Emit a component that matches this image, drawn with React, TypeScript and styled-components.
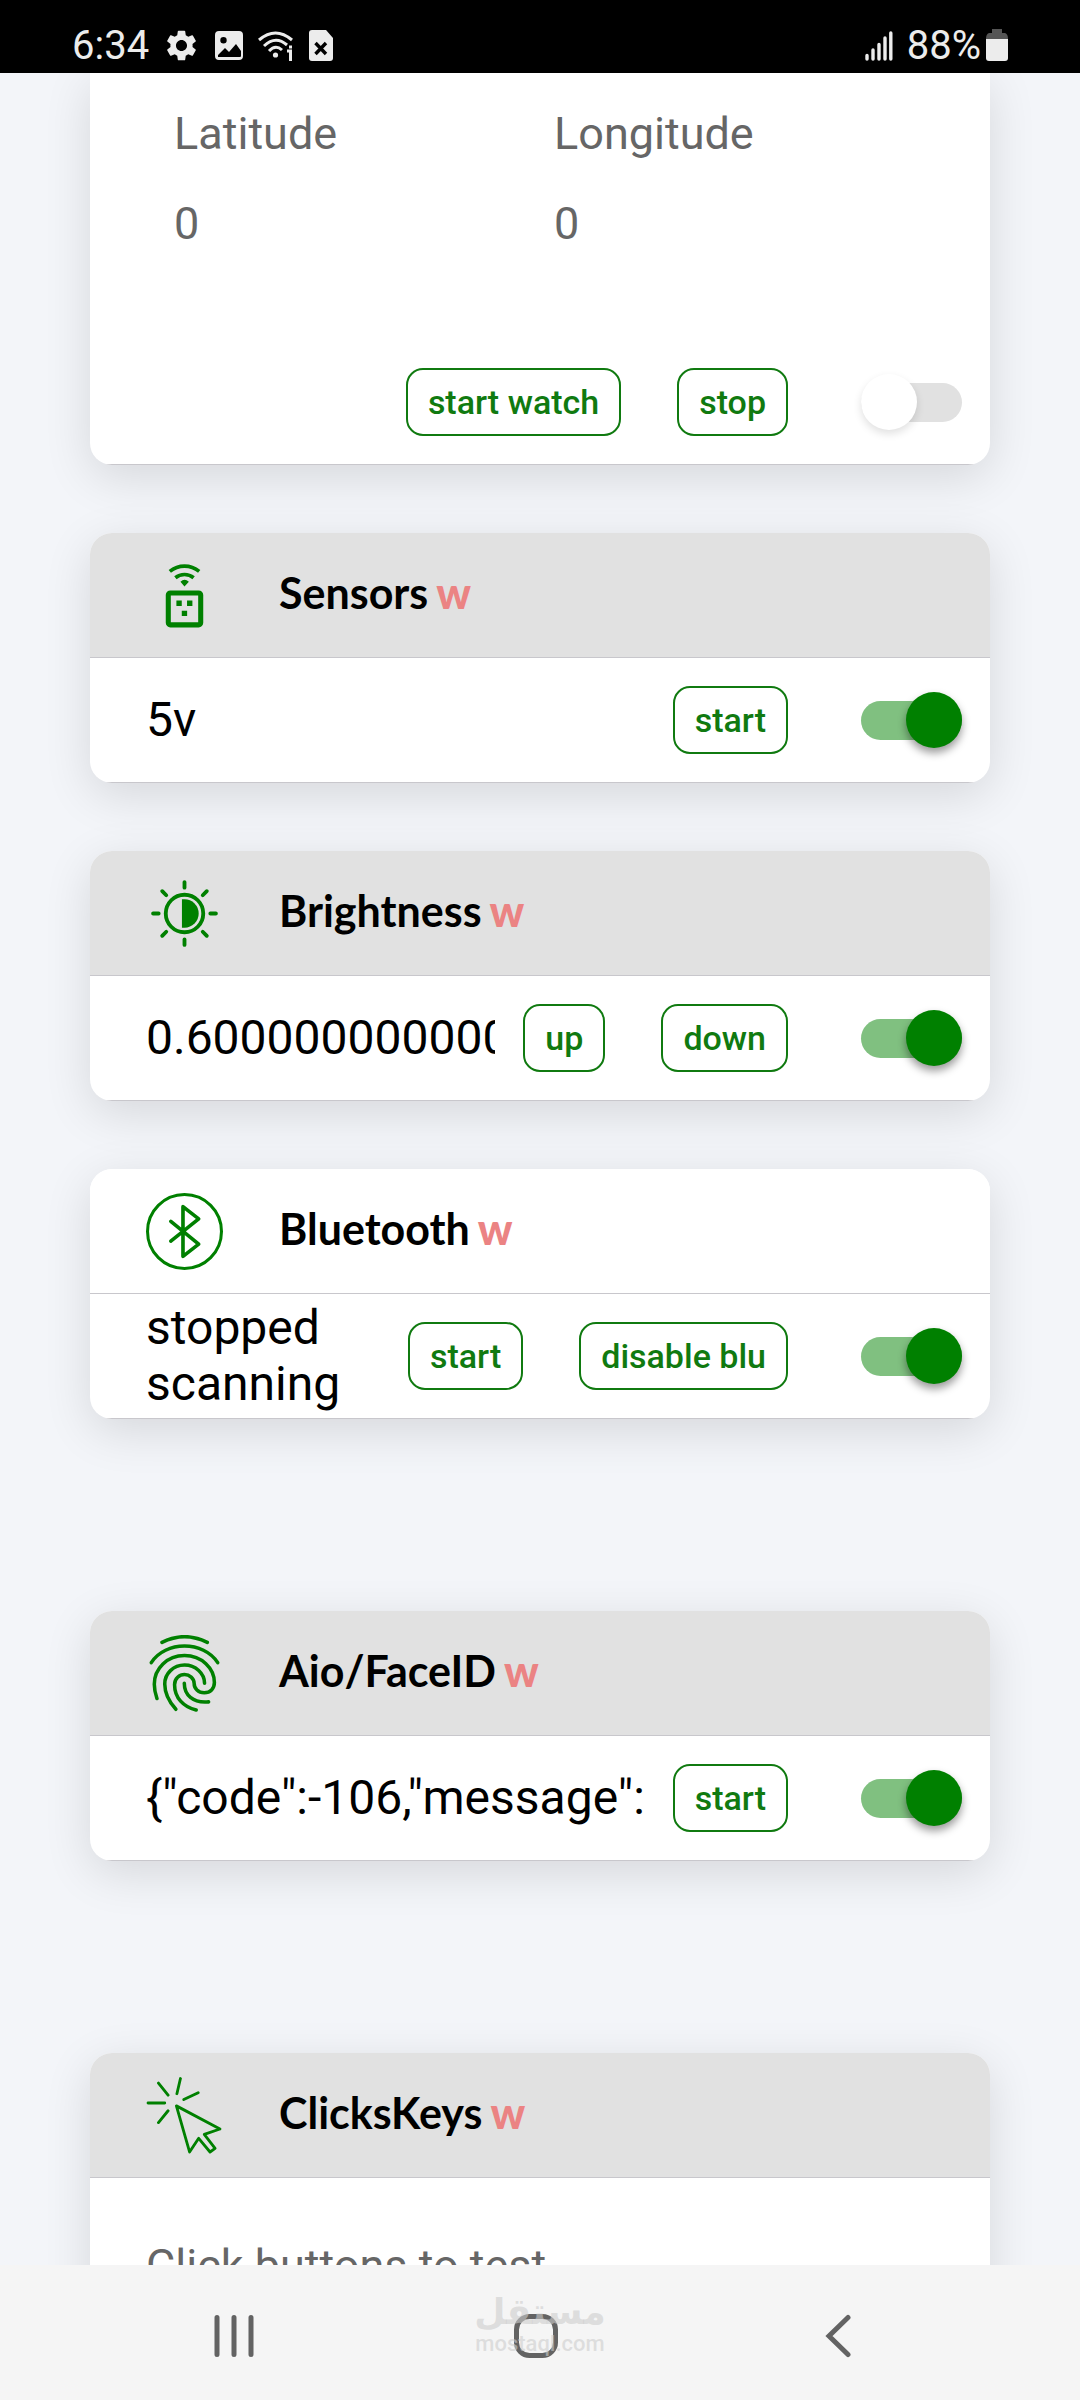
import React from "react";
import styled, { createGlobalStyle } from "styled-components";
import { MdSettings } from "react-icons/md";

const GlobalStyle = createGlobalStyle`
  * { box-sizing: border-box; }
  body {
    margin: 0;
    background: #f3f5f9;
    font-family: Roboto, "Liberation Sans", sans-serif;
    color: #000;
  }
`;

const Screen = styled.div`
  display: flex;
  flex-direction: column;
  height: 100vh;
  overflow: hidden;
`;

const StatusBar = styled.header`
  display: flex;
  flex: none;
  align-items: center;
  justify-content: space-between;
  height: 73px;
  padding: 18px 72px 0;
  background: #000;
  color: #ececec;
  font-size: 40px;
  line-height: 54px;
  position: relative;
  z-index: 1;
`;

const StatusGroup = styled.div<{ $gap: number }>`
  display: flex;
  align-items: center;
  gap: ${(p) => p.$gap}px;

  svg {
    display: block;
  }
`;

const Content = styled.main`
  flex: 1;
  min-height: 0;
  overflow: hidden;
  padding: 0 90px;
`;

const Card = styled.section<{ $gap?: number; $continued?: boolean }>`
  margin-top: ${(p) => p.$gap ?? 0}px;
  overflow: hidden;
  border-radius: ${(p) => (p.$continued ? "0 0 22px 22px" : "22px")};
  background: #fff;
  box-shadow: 0 12px 48px rgba(0, 0, 0, 0.12);
`;

const CardHeader = styled.header<{ $plain?: boolean }>`
  display: flex;
  align-items: center;
  gap: 56px;
  height: 125px;
  padding: 0 56px;
  border-bottom: 1px solid #c8c7cc;
  background: ${(p) => (p.$plain ? "#fff" : "#e1e1e1")};
  color: #008000;

  svg {
    flex: none;
    display: block;
  }
`;

const Title = styled.h2`
  display: flex;
  gap: 8px;
  margin: 0;
  padding-bottom: 4px;
  color: #000;
  font-family: Lato, "Open Sans", sans-serif;
  font-size: 43px;
  font-weight: 700;
  line-height: 56px;
`;

const Flag = styled.span`
  color: #eb8383;
  font-weight: 900;
`;

const Row = styled.div`
  display: flex;
  align-items: center;
  height: 125px;
  padding: 0 28px 0 56px;
  border-bottom: 1px solid #c8c7cc;
`;

const Value = styled.output<{ $wrap?: boolean }>`
  flex: 1;
  min-width: 0;
  margin-right: 28px;
  overflow: hidden;
  font-size: 48px;
  line-height: 56px;
  white-space: ${(p) => (p.$wrap ? "normal" : "nowrap")};
`;

const Actions = styled.div`
  display: flex;
  flex: none;
  gap: 56px;
  margin-right: 73px;
`;

const Button = styled.button`
  height: 68px;
  padding: 0 20px;
  border: 2px solid #107a10;
  border-radius: 17px;
  background: #fff;
  color: #107a10;
  font-family: inherit;
  font-size: 34px;
  font-weight: 500;
  line-height: 40px;
  white-space: nowrap;
`;

const Switch = styled.input`
  appearance: none;
  display: flex;
  flex: none;
  align-items: center;
  width: 101px;
  height: 39px;
  margin: 0;
  border-radius: 20px;
  background: #e1e1e1;

  &::before {
    content: "";
    flex: none;
    width: 56px;
    height: 56px;
    border-radius: 50%;
    background: #fff;
    box-shadow: 0 4px 8px rgba(0, 0, 0, 0.12);
  }

  &:checked {
    justify-content: flex-end;
    background: #80c080;
  }

  &:checked::before {
    background: #008000;
    box-shadow: 0 5px 9px rgba(0, 0, 0, 0.4);
  }
`;

const Coordinates = styled.dl`
  display: grid;
  grid-template-columns: 1fr 1fr;
  margin: 0;
  padding: 16px 56px 71px 84px;
  color: #666;
  font-size: 45px;
  line-height: 90px;

  dt,
  dd {
    margin: 0;
  }
`;

const Hint = styled.p`
  margin: 0;
  padding: 60px 56px;
  color: #666;
  font-size: 45px;
  line-height: 56px;
`;

const NavBar = styled.nav`
  display: flex;
  flex: none;
  height: 135px;
  padding: 0 91px 0 83px;
  background: #f5f5f5;
  position: relative;
  z-index: 1;
`;

const NavButton = styled.button`
  display: flex;
  flex: 1;
  align-items: center;
  justify-content: center;
  padding: 6px 0 0;
  border: 0;
  background: none;
  color: #636363;
`;

const Watermark = styled.div`
  position: absolute;
  top: 24px;
  left: 50%;
  display: flex;
  flex-direction: column;
  align-items: center;
  transform: translateX(-50%);
  color: rgba(205, 205, 205, 0.6);
  font-weight: 700;
  pointer-events: none;
`;

const WatermarkName = styled.span`
  font-family: "DejaVu Sans", sans-serif;
  font-size: 36px;
  line-height: 46px;
`;

const WatermarkSite = styled.span`
  font-size: 22px;
  font-weight: 500;
  line-height: 18px;
`;

const PictureIcon = () => (
  <svg width="30" height="32" viewBox="0 0 30 32" fill="#ececec" aria-hidden="true">
    <path
      fillRule="evenodd"
      d="M5 1h20a4 4 0 0 1 4 4v21a4 4 0 0 1-4 4H5a4 4 0 0 1-4-4V5a4 4 0 0 1 4-4zM4 25v2h22a1 1 0 0 0 1-1v-5l-5-7-7 8-4-4zM9.500 7a3.200 3.200 0 1 0 0 6.400a3.200 3.200 0 1 0 0-6.400z"
    />
  </svg>
);

const WifiInfoIcon = () => (
  <svg width="36" height="32" viewBox="0 0 36 32" fill="none" stroke="#ececec" strokeWidth="3" aria-hidden="true">
    <path d="M1 10Q17.500-4 34 10M6 16Q17.500 5 29 15M11 21Q17.500 14 24 20" />
    <circle cx="17.500" cy="25" r="2.600" fill="#ececec" stroke="none" />
    <path d="M29 21H32.500V31M32.500 15.500V18.500" />
  </svg>
);

const SimIcon = () => (
  <svg width="26" height="32" viewBox="0 0 26 32" aria-hidden="true">
    <path fill="#ececec" d="M4 0h14l7 8v20a3 3 0 0 1-3 3H4a3 3 0 0 1-3-3V3a3 3 0 0 1 3-3z" />
    <path stroke="#000" strokeWidth="3.400" d="M7.500 13l10.500 11M18 13L7.500 24" />
  </svg>
);

const SignalIcon = () => (
  <svg width="28" height="30" viewBox="0 0 28 30" stroke="#ececec" strokeWidth="3.400" strokeLinecap="round" aria-hidden="true">
    <path d="M2 24.500V28M8 19V28M14 13.500V28M20 7V28M25.800 2V28" />
  </svg>
);

const BatteryIcon = () => (
  <svg width="22" height="33" viewBox="0 0 22 33" aria-hidden="true">
    <path fill="#555" d="M6 0h10v4h3q3 1 3 6H0q0-5 3-6h3z" />
    <path fill="#ececec" d="M0 10h22v19a3 3 0 0 1-3 3H3a3 3 0 0 1-3-3z" />
  </svg>
);

const SensorIcon = () => (
  <svg width="77" height="77" viewBox="0 0 76 76" fill="none" stroke="currentColor" aria-hidden="true">
    <rect x="22" y="35.500" width="32" height="31.500" rx="2" strokeWidth="5" />
    <path strokeWidth="3.600" d="M23.500 14.200A23 23 0 0 1 52.500 14.200M29 20.500A14 14 0 0 1 47 20.500" />
    <path fill="currentColor" stroke="none" d="M34 24.500Q38 20.500 42.300 24.500L38 29zM30 43h5.300v5.300H30zM40.500 43h5.300v5.300h-5.300zM35.300 53h5.300v5.300h-5.300z" />
  </svg>
);

const BrightnessIcon = () => (
  <svg width="77" height="77" viewBox="0 0 76 76" fill="none" stroke="currentColor" strokeWidth="3.800" aria-hidden="true">
    <circle cx="38" cy="38" r="18.500" />
    <path fill="currentColor" stroke="none" d="M35.500 24h2.500a14 14 0 0 1 0 28h-2.500z" />
    <path strokeLinecap="round" d="M38 7v5.500M38 63.500V69M7 38h5.500M63.500 38H69M16 16l4 4M56 56l4 4M60 16l-4 4M20 56l-4 4" />
  </svg>
);

const BluetoothIcon = () => (
  <svg width="77" height="77" viewBox="0 0 76 76" fill="none" stroke="currentColor" strokeLinejoin="round" strokeLinecap="round" aria-hidden="true">
    <circle cx="38" cy="38" r="36.500" strokeWidth="3" />
    <path strokeWidth="3.600" d="M24.500 28L52 50.500L36.500 62.500V13.500L52 25.500L24.500 47.500" />
  </svg>
);

const FingerprintIcon = () => (
  <svg width="77" height="77" viewBox="0 0 76 76" fill="none" stroke="currentColor" strokeWidth="3.500" strokeLinecap="round" aria-hidden="true">
    <path d="M15.800 7.300Q38-4 60.500 7.300" />
    <path d="M5.200 27.300C19 5.500 57 5.500 70.800 27.300" />
    <path d="M10.800 62.700Q8.200 55 8.200 48.500C8.200 33 21 20.300 38 20.300S67.500 33 67.500 47C67.500 53 63.500 57 57.500 57S47.500 53 47.500 47.700C47.500 43 43 39 38 39S28.200 43 28.200 49C28.200 62 37 71 49.500 74" />
    <path d="M29.500 73.300C22 65 18.500 57 18.500 48.300C18.500 38 27 29.700 38 29.700S57.800 38 57.800 47.700" />
    <path d="M37.800 47.700C37.800 59 46 67.500 61.800 66" />
  </svg>
);

const ClickIcon = () => (
  <svg width="77" height="77" viewBox="0 0 76 76" fill="none" stroke="currentColor" strokeWidth="2.800" strokeLinejoin="round" strokeLinecap="round" aria-hidden="true">
    <path d="M2 25.700H18.500M12.300 6L21.800 18M34 1.500L30.500 16.500M51.500 15.500L37.300 22.300M21.800 33.300L12.300 45" />
    <path d="M30 28.500L73 51.300L57.500 56.700L68.200 70.500L63.200 74L52 60.500L43 74z" />
  </svg>
);

type Setting = {
  id: string;
  title: string;
  icon: React.ReactNode;
  value: string;
  actions: string[];
  gap: number;
  plain?: boolean;
  wrap?: boolean;
};

const settings: Setting[] = [
  { id: "sensors", title: "Sensors", icon: <SensorIcon />, value: "5v", actions: ["start"], gap: 68 },
  { id: "brightness", title: "Brightness", icon: <BrightnessIcon />, value: "0.600000000000", actions: ["up", "down"], gap: 68 },
  { id: "bluetooth", title: "Bluetooth", icon: <BluetoothIcon />, value: "stopped scanning", actions: ["start", "disable blu"], gap: 68, plain: true, wrap: true },
  { id: "faceid", title: "Aio/FaceID", icon: <FingerprintIcon />, value: '{"code":-106,"message":"', actions: ["start"], gap: 192 },
];

const ControlRow = ({ name, value, actions, on, wrap }: { name: string; value: string; actions: string[]; on?: boolean; wrap?: boolean }) => (
  <Row>
    <Value $wrap={wrap}>{value}</Value>
    <Actions>
      {actions.map((action) => (
        <Button key={action} type="button">{action}</Button>
      ))}
    </Actions>
    <Switch type="checkbox" role="switch" aria-label={name} defaultChecked={on} />
  </Row>
);

export default function App() {
  return (
    <>
      <GlobalStyle />
      <Screen>
        <StatusBar>
          <StatusGroup $gap={14}>
            <span>6:34</span>
            <MdSettings size={37} />
            <PictureIcon />
            <WifiInfoIcon />
            <SimIcon />
          </StatusGroup>
          <StatusGroup $gap={14}>
            <SignalIcon />
            <StatusGroup $gap={5}>
              <span>88%</span>
              <BatteryIcon />
            </StatusGroup>
          </StatusGroup>
        </StatusBar>

        <Content>
          <Card $continued>
            <Coordinates>
              <dt>Latitude</dt>
              <dt>Longitude</dt>
              <dd>0</dd>
              <dd>0</dd>
            </Coordinates>
            <ControlRow name="Location" value="" actions={["start watch", "stop"]} />
          </Card>

          {settings.map((s) => (
            <Card key={s.id} $gap={s.gap}>
              <CardHeader $plain={s.plain}>
                {s.icon}
                <Title>{s.title} <Flag>w</Flag></Title>
              </CardHeader>
              <ControlRow name={s.title} value={s.value} actions={s.actions} wrap={s.wrap} on />
            </Card>
          ))}

          <Card $gap={192}>
            <CardHeader>
              <ClickIcon />
              <Title>ClicksKeys <Flag>w</Flag></Title>
            </CardHeader>
            <Hint>Click buttons to test</Hint>
          </Card>
        </Content>

        <NavBar>
          <NavButton type="button" aria-label="Recent apps">
            <svg width="44" height="44" viewBox="0 0 44 44" stroke="currentColor" strokeWidth="5" strokeLinecap="round">
              <path d="M5 3.500V40.500M22 3.500V40.500M39 3.500V40.500" />
            </svg>
          </NavButton>
          <NavButton type="button" aria-label="Home">
            <svg width="46" height="46" viewBox="0 0 46 46" fill="none" stroke="currentColor" strokeWidth="5">
              <rect x="3.500" y="3.500" width="39" height="39" rx="13" />
            </svg>
          </NavButton>
          <NavButton type="button" aria-label="Back">
            <svg width="28" height="44" viewBox="0 0 28 44" fill="none" stroke="currentColor" strokeWidth="5" strokeLinecap="round">
              <path d="M24 3.500L5 22L24 40.500" />
            </svg>
          </NavButton>
          <Watermark>
            <WatermarkName lang="ar">مستقل</WatermarkName>
            <WatermarkSite>mostaql.com</WatermarkSite>
          </Watermark>
        </NavBar>
      </Screen>
    </>
  );
}
